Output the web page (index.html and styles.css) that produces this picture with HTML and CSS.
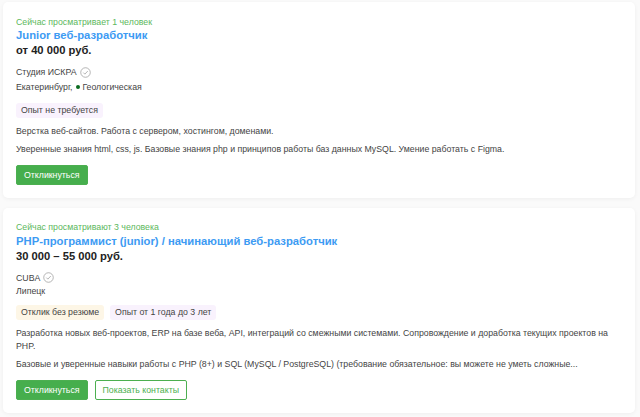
FILE: index.html
```html
<!DOCTYPE html>
<html lang="ru">
<head>
  <meta charset="UTF-8">
  <title>Вакансии</title>
  <link rel="stylesheet" href="styles.css">
</head>
<body>

  <!-- Vacancy 1 -->
  <div class="card">
    <div class="watching">Сейчас просматривает 1 человек</div>
    <a class="title" href="#">Junior веб-разработчик</a>
    <div class="salary">от 40 000 руб.</div>
    <div class="company">Студия ИСКРА
      <svg class="verified" viewBox="0 0 12 12"><circle cx="6" cy="6" r="5.2"/><path d="M3.6 6.1l1.7 1.7 3.2-3.4"/></svg>
    </div>
    <div class="city city-metro">Екатеринбург, <span class="metro-dot"></span> Геологическая</div>
    <div class="tags">
      <span class="tag tag-purple">Опыт не требуется</span>
    </div>
    <p class="text">Верстка веб-сайтов. Работа с сервером, хостингом, доменами.</p>
    <p class="text">Уверенные знания html, css, js. Базовые знания php и принципов работы баз данных MySQL. Умение работать с Figma.</p>
    <div class="buttons">
      <button class="btn btn-green">Откликнуться</button>
    </div>
  </div>

  <!-- Vacancy 2 -->
  <div class="card">
    <div class="watching">Сейчас просматривают 3 человека</div>
    <a class="title" href="#">PHP-программист (junior) / начинающий веб-разработчик</a>
    <div class="salary">30 000 – 55 000 руб.</div>
    <div class="company">CUBA
      <svg class="verified" viewBox="0 0 12 12"><circle cx="6" cy="6" r="5.2"/><path d="M3.6 6.1l1.7 1.7 3.2-3.4"/></svg>
    </div>
    <div class="city">Липецк</div>
    <div class="tags">
      <span class="tag tag-yellow">Отклик без резюме</span>
      <span class="tag tag-purple">Опыт от 1 года до 3 лет</span>
    </div>
    <p class="text">Разработка новых веб-проектов, ERP на базе веба, API, интеграций со смежными системами. Сопровождение и доработка текущих проектов на PHP.</p>
    <p class="text">Базовые и уверенные навыки работы с PHP (8+) и SQL (MySQL / PostgreSQL) (требование обязательное: вы можете не уметь сложные...</p>
    <div class="buttons">
      <button class="btn btn-green">Откликнуться</button>
      <button class="btn btn-outline">Показать контакты</button>
    </div>
  </div>

</body>
</html>
```

FILE: styles.css
```css
* { margin: 0; padding: 0; box-sizing: border-box; }
body {
  font-family: 'Liberation Sans', Arial, sans-serif;
  font-size: 8.77px;
  color: #444;
  background: #fafafa;
  padding: 2px 5px 0 3px;
  height: 417px;
  overflow: hidden;
}
.card {
  background: #fff;
  border-radius: 5px;
  box-shadow: 0 1px 4px rgba(0,0,0,0.05);
  padding: 13px 13px 12.5px;
  margin-bottom: 10px;
}
.watching { color: #5cb85c; line-height: 13px; margin-top: 0.5px; margin-bottom: -0.5px; }
.title {
  display: block;
  color: #3d9bf3;
  font-weight: 700;
  font-size: 11.27px;
  line-height: 15px;
  text-decoration: none;
}
.salary { color: #222; font-weight: 700; font-size: 11.2px; line-height: 14px; margin-bottom: 8px; }
.company { display: flex; align-items: center; gap: 3px; line-height: 14px; }
.verified { width: 11px; height: 11px; fill: none; stroke: #999; stroke-width: 0.8; }
.city { line-height: 13px; }
.city-metro { margin-top: 2px; padding-bottom: 1.5px; }
.metro-dot {
  display: inline-block;
  width: 4px;
  height: 4px;
  border-radius: 50%;
  background: #0a6b1f;
  margin: 0 0 1px 1px;
}
.tags { display: flex; gap: 6px; margin-top: 7px; margin-bottom: 7.5px; }
.tag { border-radius: 3px; padding: 0 5px; line-height: 15px; }
.tag-purple { background: #f9f2fd; }
.tag-yellow { background: #fdf6e6; }
.text { line-height: 13px; margin-bottom: 5px; }
.buttons { display: flex; gap: 7px; margin-top: 9px; }
.btn {
  font-family: inherit;
  font-size: 8.77px;
  height: 20px;
  border-radius: 2px;
  padding: 0 7px;
  border: 1px solid #4caf50;
  cursor: pointer;
}
.btn-green { background: #46ae4d; color: #fff; }
.btn-outline { background: #fff; color: #4caf50; }
```
